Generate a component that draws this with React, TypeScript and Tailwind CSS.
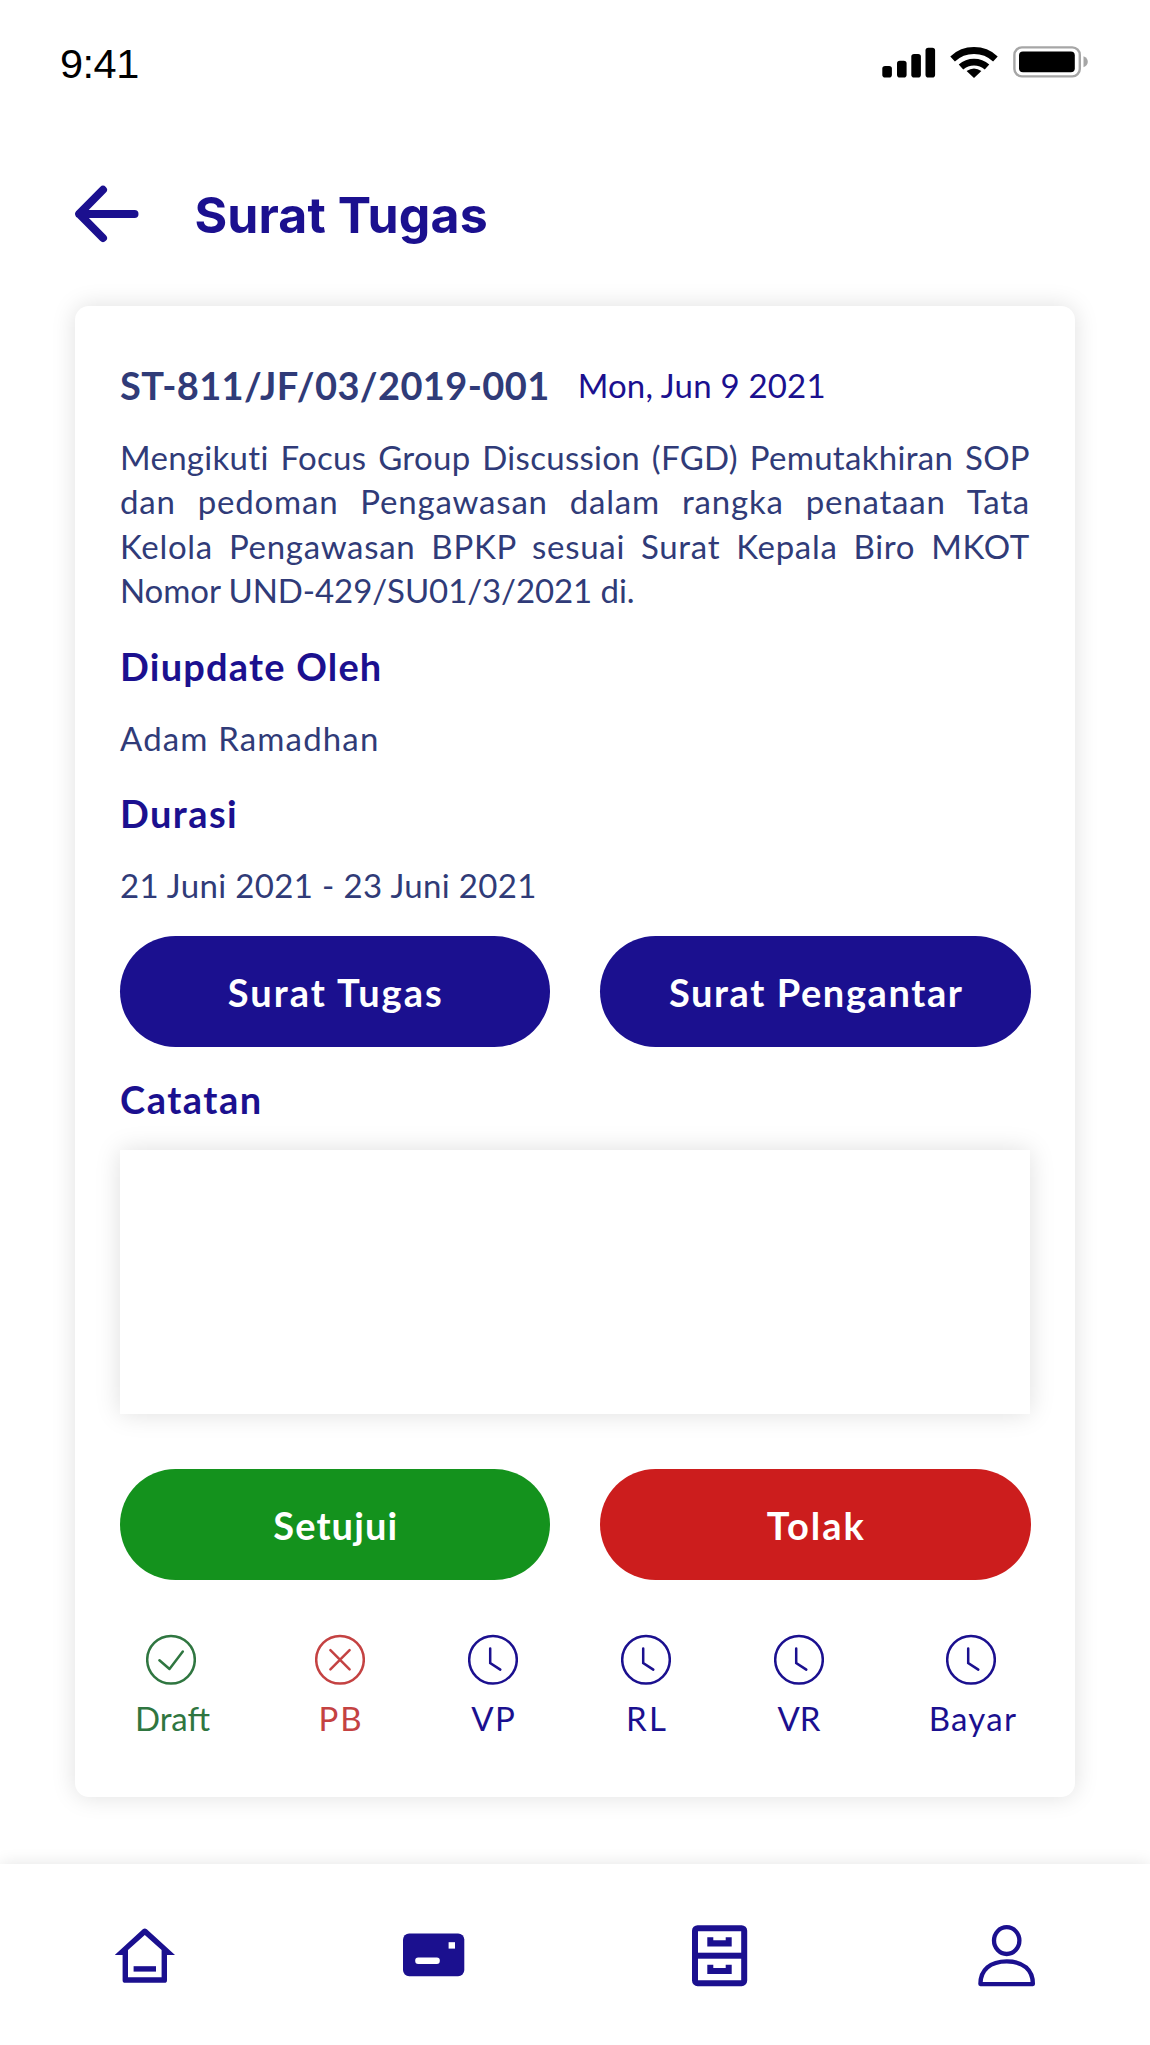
import React from "react";

const NAVY = "#1b108f";

function SignalIcon() {
  return (
    <svg width="54" height="31" viewBox="0 0 54 31" fill="#000">
      <rect x="0.3" y="19" width="9.6" height="11.5" rx="2.8" />
      <rect x="15" y="13.7" width="9.6" height="16.8" rx="2.8" />
      <rect x="29.3" y="7" width="9.6" height="23.5" rx="2.8" />
      <rect x="43.5" y="0.7" width="9.6" height="29.8" rx="2.8" />
    </svg>
  );
}

function WifiIcon() {
  return (
    <svg width="48" height="31" viewBox="0 0 48 31" fill="none" stroke="#000" strokeWidth="6.8">
      <path d="M2.6 11.9A31.5 31.5 0 0 1 45.4 11.9" />
      <path d="M11 20A19.6 19.6 0 0 1 37 20" />
      <path d="M24 31L16.6 24Q24 18.8 31.4 24Z" fill="#000" stroke="none" />
    </svg>
  );
}

function BatteryIcon() {
  return (
    <svg width="76" height="32" viewBox="0 0 76 32">
      <rect x="1.4" y="1.4" width="65.4" height="29" rx="7.5" fill="none" stroke="#a6a6a6" strokeWidth="2.4" />
      <rect x="6" y="5.6" width="55.8" height="20.7" rx="4" fill="#000" />
      <path d="M70.5 10.2Q74.8 12 74.8 15.8Q74.8 19.5 70.5 21.3Z" fill="#a6a6a6" />
    </svg>
  );
}

function BackArrow() {
  return (
    <svg width="64" height="58" viewBox="0 0 64 58" fill="none" stroke={NAVY} strokeWidth="8" strokeLinecap="round" strokeLinejoin="round">
      <path d="M28 4.8L4.2 28.9L28 53M4.2 28.9H59.5" />
    </svg>
  );
}

type Status = "done" | "rejected" | "pending";

function StatusIcon({ kind }: { kind: Status }) {
  return (
    <svg width="50" height="51" viewBox="0 0 50 51" fill="none" stroke="currentColor" strokeWidth="2.5" strokeLinecap="round" strokeLinejoin="round">
      <circle cx="25" cy="25.7" r="23.8" />
      {kind === "done" && <path d="M13.4 26.3L23.5 35L36.8 17.5" />}
      {kind === "rejected" && <path d="M15.4 16.1L34.6 35.3M34.6 16.1L15.4 35.3" />}
      {kind === "pending" && <path d="M22.2 14.5V29L32.3 35.6" strokeLinejoin="miter" />}
    </svg>
  );
}

const STEPS: { label: string; kind: Status; color: string; box: string; track: string }[] = [
  { label: "Draft", kind: "done", color: "text-[#2f7640]", box: "w-[72px] mr-[5px]", track: "ml-[3px]" },
  { label: "PB", kind: "rejected", color: "text-[#c44242]", box: "w-[50px]", track: "tracking-[2px] -mr-[2px]" },
  { label: "VP", kind: "pending", color: "text-[#1b108f]", box: "w-[50px]", track: "tracking-[1.5px] -mr-[1.5px]" },
  { label: "RL", kind: "pending", color: "text-[#1b108f]", box: "w-[50px]", track: "tracking-[2.5px] -mr-[2.5px]" },
  { label: "VR", kind: "pending", color: "text-[#1b108f]", box: "w-[50px]", track: "" },
  { label: "Bayar", kind: "pending", color: "text-[#1b108f]", box: "w-[88px]", track: "tracking-[1.3px] -mr-[4px]" },
];

function PillButton({ label, className }: { label: string; className: string }) {
  return (
    <button className={`flex flex-1 items-center justify-center rounded-full pl-[2px] text-[38px] leading-none font-bold text-white ${className}`}>
      {label}
    </button>
  );
}

function Heading({ children, className }: { children: string; className: string }) {
  return <h2 className={`h-[50px] text-[38px] leading-[50px] font-bold text-[#1b108f] ${className}`}>{children}</h2>;
}

function HomeIcon() {
  return (
    <svg width="60" height="56" viewBox="0 0 60 56">
      <path
        fill={NAVY}
        fillRule="evenodd"
        d="M27.8 1.2Q29.8 -0.4 31.8 1.2L60 27H52V52.2Q52 54.8 49.4 54.8H10.2Q7.6 54.8 7.6 52.2V27H-0.2ZM29.8 7L13 22V49.2H46.6V22Z"
      />
      <rect x="18.6" y="38.2" width="22.4" height="5.4" fill={NAVY} />
    </svg>
  );
}

function CardIcon() {
  return (
    <svg width="62" height="44" viewBox="0 0 62 44">
      <rect x="0" y="0.4" width="61.3" height="42.8" rx="6.2" fill={NAVY} />
      <rect x="12.2" y="24.6" width="24.6" height="6.4" rx="3" fill="#fff" />
      <rect x="45.6" y="9.2" width="6.4" height="6.4" fill="#fff" />
    </svg>
  );
}

function ArchiveIcon() {
  return (
    <svg width="56" height="62" viewBox="0 0 56 62" fill={NAVY}>
      <rect x="3" y="3.2" width="49.2" height="55" rx="2.6" fill="none" stroke={NAVY} strokeWidth="6" />
      <rect x="3" y="27.7" width="49" height="6" />
      <path d="M15.3 12.2H21.3V15.3H33.7V12.2H39.7V21.4H15.3Z" />
      <path d="M15.3 39.8H21.3V42.9H33.7V39.8H39.7V49H15.3Z" />
    </svg>
  );
}

function UserIcon() {
  return (
    <svg width="58" height="62" viewBox="0 0 58 62" fill="none" stroke={NAVY} strokeWidth="4.3" strokeLinejoin="round">
      <ellipse cx="28.7" cy="15.6" rx="12.7" ry="13.4" />
      <path d="M2.4 59.1C2.4 45 12.2 36.4 28.8 36.4S54.9 45 54.9 59.1Z" />
    </svg>
  );
}

const justified = "[text-align-last:justify] whitespace-nowrap";

export default function App() {
  return (
    <div className="flex h-[2045px] w-[1150px] flex-col overflow-hidden bg-white font-['Lato','Nunito',sans-serif]">
      <div className="flex h-[124px] shrink-0 items-center justify-between pr-[61px] pl-[60px]">
        <span className="mt-[3px] font-['Liberation_Sans',sans-serif] text-[41.5px] leading-[46px] tracking-[-0.5px]">9:41</span>
        <div className="flex items-center">
          <SignalIcon />
          <div className="ml-[14px]"><WifiIcon /></div>
          <div className="ml-[15px]"><BatteryIcon /></div>
        </div>
      </div>

      <header className="flex h-[182px] shrink-0 items-start pl-[75px] pt-[61px]">
        <BackArrow />
        <h1 className="ml-[55.5px] font-['Inter',sans-serif] text-[50px] leading-[60px] font-bold tracking-[0.1px] text-[#1b108f]">Surat Tugas</h1>
      </header>

      <main className="mx-[75px] h-[1491px] shrink-0 rounded-[14px] bg-white px-[45px] pt-[56px] shadow-[0_0_24px_rgba(0,0,0,0.13)]">
        <div className="flex h-[47px] items-center gap-[28px] whitespace-nowrap">
          <span className="text-[38px] leading-[47px] font-bold tracking-[0.4px] text-[#303b78]">ST-811/JF/03/2019-001</span>
          <span className="text-[33px] leading-[45px] tracking-[0.2px] text-[#1b108f]">Mon, Jun 9 2021</span>
        </div>

        <p className="mt-[25.5px] text-[33px] leading-[44.5px] text-[#303b78]">
          <span className={`block tracking-[0.3px] ${justified}`}>Mengikuti Focus Group Discussion (FGD) Pemutakhiran SOP</span>
          <span className={`block tracking-[0.8px] ${justified}`}>dan pedoman Pengawasan dalam rangka penataan Tata</span>
          <span className={`block tracking-[0.7px] ${justified}`}>Kelola Pengawasan BPKP sesuai Surat Kepala Biro MKOT</span>
          <span className="block tracking-[-0.08px]">Nomor UND-429/SU01/3/2021 di.</span>
        </p>

        <Heading className="mt-[28.5px] tracking-[1.2px]">Diupdate Oleh</Heading>
        <p className="mt-[25px] h-[44px] text-[33px] leading-[44px] tracking-[1.15px] text-[#303b78]">Adam Ramadhan</p>
        <Heading className="mt-[28px] tracking-[1.4px]">Durasi</Heading>
        <p className="mt-[25px] h-[44px] text-[33px] leading-[44px] tracking-[0.36px] text-[#303b78]">21 Juni 2021 - 23 Juni 2021</p>

        <div className="-mx-[0.5px] mt-[29px] flex h-[111px] gap-[50px]">
          <PillButton label="Surat Tugas" className="bg-[#1b108f] tracking-[2px]" />
          <PillButton label="Surat Pengantar" className="bg-[#1b108f] tracking-[1.6px]" />
        </div>

        <Heading className="mt-[27px] tracking-[1.5px]">Catatan</Heading>
        <textarea className="mt-[26px] block h-[264px] w-full resize-none bg-white shadow-[0_0_24px_rgba(0,0,0,0.13)] outline-none" />

        <div className="-mx-[0.5px] mt-[55px] flex h-[111px] gap-[50px]">
          <PillButton label="Setujui" className="bg-[#14921d] tracking-[1.1px]" />
          <PillButton label="Tolak" className="bg-[#cc1d1d] tracking-[2px]" />
        </div>

        <div className="mt-[54px] flex gap-[103px] pl-[15px]">
          {STEPS.map((s) => (
            <div key={s.label} className={`flex shrink-0 flex-col items-center whitespace-nowrap ${s.box} ${s.color}`}>
              <StatusIcon kind={s.kind} />
              <span className={`mt-[11px] text-[33px] leading-[44px] ${s.track}`}>{s.label}</span>
            </div>
          ))}
        </div>
      </main>

      <nav className="mt-[66.5px] flex flex-1 items-start justify-between bg-white pr-[114px] pl-[115px] shadow-[0_0_16px_rgba(0,0,0,0.11)]">
        <div className="mt-[64.5px]"><HomeIcon /></div>
        <div className="mt-[69.5px]"><CardIcon /></div>
        <div className="mt-[61.5px] mr-[2px] -ml-[2px]"><ArchiveIcon /></div>
        <div className="mt-[61.5px]"><UserIcon /></div>
      </nav>
    </div>
  );
}
